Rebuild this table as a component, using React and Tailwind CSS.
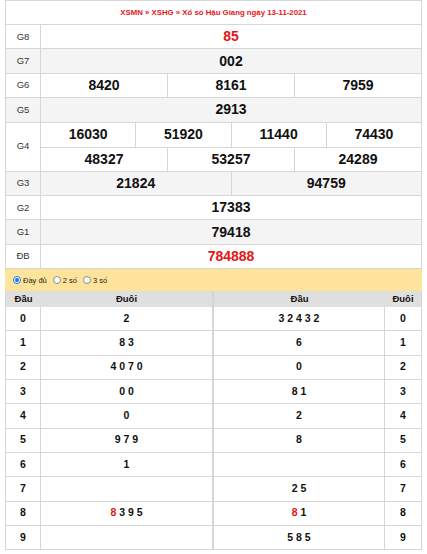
import React from "react";

const font = { fontFamily: '"Liberation Sans", Arial, sans-serif' };

const prizes = [
  { label: "G8", rows: [["85"]], red: true },
  { label: "G7", rows: [["002"]] },
  { label: "G6", rows: [["8420", "8161", "7959"]] },
  { label: "G5", rows: [["2913"]] },
  { label: "G4", rows: [["16030", "51920", "11440", "74430"], ["48327", "53257", "24289"]] },
  { label: "G3", rows: [["21824", "94759"]] },
  { label: "G2", rows: [["17383"]] },
  { label: "G1", rows: [["79418"]] },
  { label: "ĐB", rows: [["784888"]], red: true },
];

const loto = [
  ["0", [["2"]], [["3 2 4 3 2"]]],
  ["1", [["8 3"]], [["6"]]],
  ["2", [["4 0 7 0"]], [["0"]]],
  ["3", [["0 0"]], [["8 1"]]],
  ["4", [["0"]], [["2"]]],
  ["5", [["9 7 9"]], [["8"]]],
  ["6", [["1"]], []],
  ["7", [], [["2 5"]]],
  ["8", [["8", true], [" 3 9 5"]], [["8", true], [" 1"]]],
  ["9", [], [["5 8 5"]]],
];

const Radio = ({ checked, label }) => (
  <label className="flex items-center gap-[2px] mr-[6px]">
    <span
      className={
        checked
          ? "w-[8px] h-[8px] rounded-full border border-[#1a73e8] flex items-center justify-center bg-white"
          : "w-[8px] h-[8px] rounded-full border border-[#8a8a8a] bg-white"
      }
    >
      {checked && <span className="w-[4px] h-[4px] rounded-full bg-[#1a73e8]" />}
    </span>
    <span className="text-[7.5px] text-[#222]">{label}</span>
  </label>
);

const Parts = ({ parts }) =>
  parts.map(([t, red], i) => (
    <span key={i} className={red ? "text-[#e61414] whitespace-pre" : "whitespace-pre"}>
      {t}
    </span>
  ));

export default function App() {
  return (
    <div className="bg-white w-[427px] h-[554px] px-[5px]" style={font}>
      <div className="border border-[#d6d6d6] h-[25px] flex items-center justify-center">
        <span className="text-[7.8px] font-bold text-[#e3191b]">
          XSMN » XSHG » Xổ số Hậu Giang ngày 13-11-2021
        </span>
      </div>

      {prizes.map((p, i) => (
        <div
          key={p.label}
          className={
            (i % 2 === 1 ? "bg-[#f4f4f4] " : "bg-white ") +
            "flex border-x border-b border-[#d6d6d6]"
          }
        >
          <div className="w-[35px] shrink-0 border-r border-[#d6d6d6] flex items-center justify-center text-[9.5px] text-[#333]">
            {p.label}
          </div>
          <div className="flex-1 flex flex-col">
            {p.rows.map((row, r) => (
              <div
                key={r}
                className={
                  p.rows.length > 1
                    ? (r > 0 ? "border-t border-[#d6d6d6] " : "") + "flex h-[24px]"
                    : "flex h-[23.4px]"
                }
              >
                {row.map((n, k) => (
                  <div
                    key={k}
                    className={
                      (k > 0 ? "border-l border-[#d6d6d6] " : "") +
                      "flex-1 flex items-center justify-center text-[14px] font-bold " +
                      (p.red ? "text-[#e61414]" : "text-[#111]")
                    }
                  >
                    {n}
                  </div>
                ))}
              </div>
            ))}
          </div>
        </div>
      ))}

      <div className="bg-[#fee49a] h-[22px] flex items-center pl-[8px]">
        <Radio checked label="Đầy đủ" />
        <Radio label="2 số" />
        <Radio label="3 số" />
      </div>

      <div className="flex">
        <div className="w-[209px] border-l border-r-2 border-[#d6d6d6]">
          <div className="flex h-[16px] bg-[#dfdfdf] text-[9.5px] font-bold text-[#111]">
            <div className="w-[35px] flex items-center justify-center">Đầu</div>
            <div className="flex-1 flex items-center justify-center">Đuôi</div>
          </div>
          {loto.map(([d, left]) => (
            <div key={d} className="flex h-[24.3px] border-b border-[#d6d6d6] text-[10.5px] font-bold text-[#111]">
              <div className="w-[35px] border-r border-[#d6d6d6] flex items-center justify-center">{d}</div>
              <div className="flex-1 flex items-center justify-center">
                <Parts parts={left} />
              </div>
            </div>
          ))}
        </div>
        <div className="flex-1 border-r border-[#d6d6d6]">
          <div className="flex h-[16px] bg-[#dfdfdf] text-[9.5px] font-bold text-[#111]">
            <div className="flex-1 flex items-center justify-center">Đầu</div>
            <div className="w-[36px] flex items-center justify-center">Đuôi</div>
          </div>
          {loto.map(([d, , right]) => (
            <div key={d} className="flex h-[24.3px] border-b border-[#d6d6d6] text-[10.5px] font-bold text-[#111]">
              <div className="flex-1 border-r border-[#d6d6d6] flex items-center justify-center">
                <Parts parts={right} />
              </div>
              <div className="w-[36px] flex items-center justify-center">{d}</div>
            </div>
          ))}
        </div>
      </div>
    </div>
  );
}
